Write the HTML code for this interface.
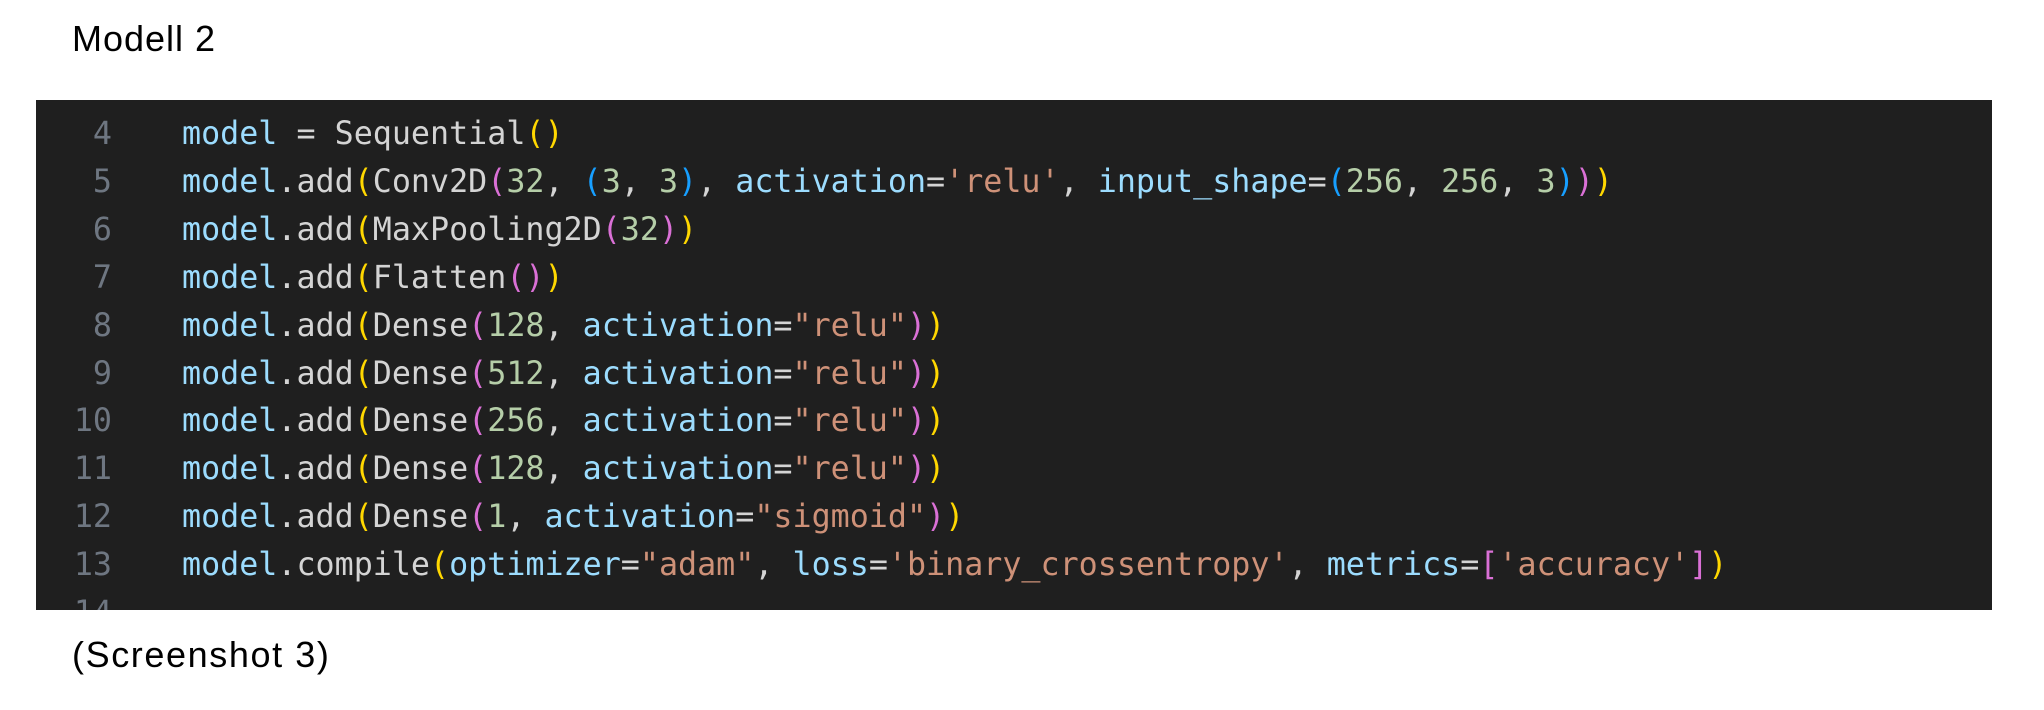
<!DOCTYPE html>
<html><head><meta charset="utf-8"><style>
html,body{margin:0;padding:0;background:#fff;width:2044px;height:710px;overflow:hidden;position:relative}
.h{position:absolute;left:72px;font-family:"Liberation Sans",Arial,sans-serif;font-size:36px;color:#000;letter-spacing:1px;line-height:1}
#t1{top:21px}
#t2{top:637px;letter-spacing:1.6px}
#box{position:absolute;left:36px;top:100px;width:1956px;height:510px;background:#1f1f1f;overflow:hidden}
.code{position:absolute;top:11px;left:0;font-family:"DejaVu Sans Mono","Liberation Mono",monospace;font-size:31.7px;line-height:47.9px;white-space:pre;color:#d4d4d4}
.ln{position:absolute;left:0;width:76px;text-align:right;color:#6e7681}
.src{position:absolute;left:146px}
.v{color:#9cdcfe}.n{color:#b5cea8}.s{color:#ce9178}
.y{color:#ffd700}.p{color:#da70d6}.b{color:#179fff}
</style></head><body>
<div class="h" id="t1">Modell 2</div>
<div id="box">
<div class="code ln">4
5
6
7
8
9
10
11
12
13
14</div>
<div class="code src"><span class="v">model</span> = Sequential<span class="y">()</span>
<span class="v">model</span>.add<span class="y">(</span>Conv2D<span class="p">(</span><span class="n">32</span>, <span class="b">(</span><span class="n">3</span>, <span class="n">3</span><span class="b">)</span>, <span class="v">activation</span>=<span class="s">'relu'</span>, <span class="v">input_shape</span>=<span class="b">(</span><span class="n">256</span>, <span class="n">256</span>, <span class="n">3</span><span class="b">)</span><span class="p">)</span><span class="y">)</span>
<span class="v">model</span>.add<span class="y">(</span>MaxPooling2D<span class="p">(</span><span class="n">32</span><span class="p">)</span><span class="y">)</span>
<span class="v">model</span>.add<span class="y">(</span>Flatten<span class="p">()</span><span class="y">)</span>
<span class="v">model</span>.add<span class="y">(</span>Dense<span class="p">(</span><span class="n">128</span>, <span class="v">activation</span>=<span class="s">"relu"</span><span class="p">)</span><span class="y">)</span>
<span class="v">model</span>.add<span class="y">(</span>Dense<span class="p">(</span><span class="n">512</span>, <span class="v">activation</span>=<span class="s">"relu"</span><span class="p">)</span><span class="y">)</span>
<span class="v">model</span>.add<span class="y">(</span>Dense<span class="p">(</span><span class="n">256</span>, <span class="v">activation</span>=<span class="s">"relu"</span><span class="p">)</span><span class="y">)</span>
<span class="v">model</span>.add<span class="y">(</span>Dense<span class="p">(</span><span class="n">128</span>, <span class="v">activation</span>=<span class="s">"relu"</span><span class="p">)</span><span class="y">)</span>
<span class="v">model</span>.add<span class="y">(</span>Dense<span class="p">(</span><span class="n">1</span>, <span class="v">activation</span>=<span class="s">"sigmoid"</span><span class="p">)</span><span class="y">)</span>
<span class="v">model</span>.compile<span class="y">(</span><span class="v">optimizer</span>=<span class="s">"adam"</span>, <span class="v">loss</span>=<span class="s">'binary_crossentropy'</span>, <span class="v">metrics</span>=<span class="p">[</span><span class="s">'accuracy'</span><span class="p">]</span><span class="y">)</span></div>
</div>
<div class="h" id="t2">(Screenshot 3)</div>
</body></html>
